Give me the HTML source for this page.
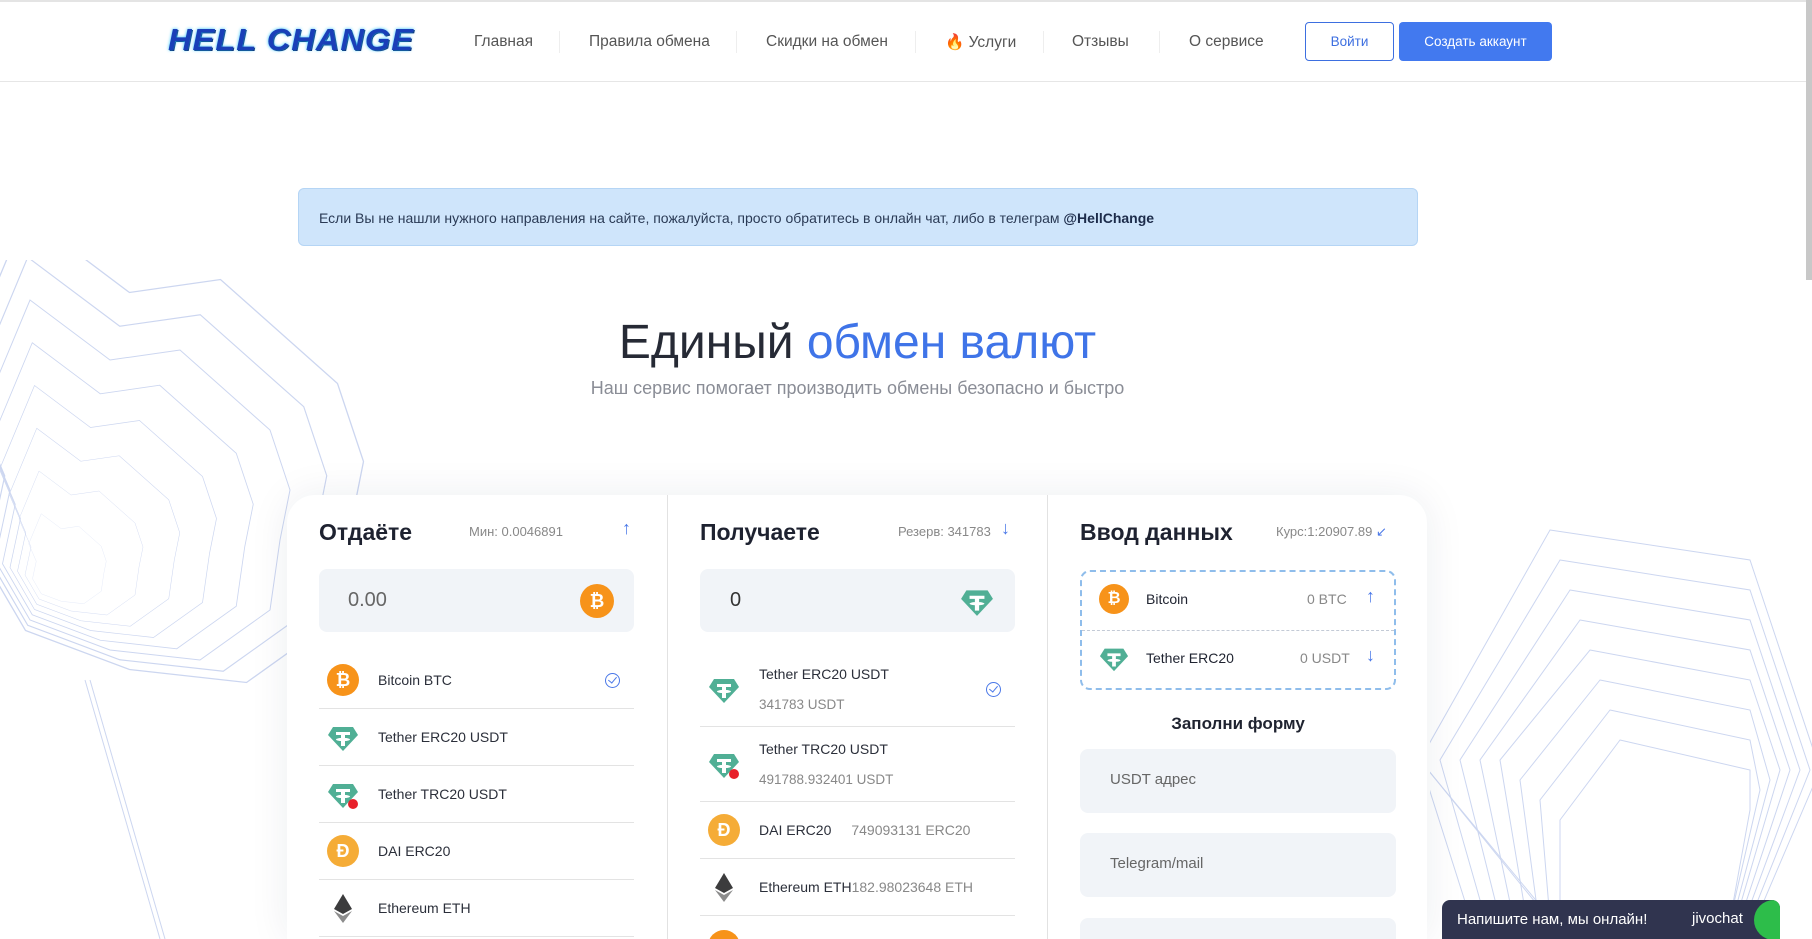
<!DOCTYPE html>
<html><head><meta charset="utf-8"><style>
*{box-sizing:border-box;margin:0;padding:0}
html,body{width:1812px;height:939px;overflow:hidden}
body{background:#fff;font-family:"Liberation Sans",sans-serif;position:relative;color:#1f2330}
.abs{position:absolute}
.hdr{left:0;top:0;width:1806px;height:82px;border-top:2px solid #e4e4e4;border-bottom:1px solid #e6e6e6;background:#fff}
.nav{top:33px;font-size:15.5px;color:#555;white-space:nowrap}
.sep{top:31px;width:1px;height:22px;background:#eee}
.btn{top:22px;height:39px;border-radius:4px;font-size:13.5px;display:flex;align-items:center;justify-content:center}
.alert{left:298px;top:188px;width:1120px;height:58px;background:#cfe5fb;border:1px solid #b5d5f5;border-radius:6px;font-size:14px;color:#2a3a55;padding:21px 20px;white-space:nowrap}
.card{left:287px;top:495px;width:1140px;height:444px;background:#fff;border-radius:28px 28px 0 0;box-shadow:0 0 40px rgba(30,40,80,.08)}
.title{font-size:23px;font-weight:bold;color:#1e2230}
.small{font-size:13px;color:#888}
.inp{height:63px;background:#f1f4f8;border-radius:8px}
.row{height:57px;border-bottom:1px solid #e3e3e3;display:flex;align-items:center;font-size:14px;color:#2b2f3a}
.ic{width:32px;height:32px;border-radius:50%;display:flex;align-items:center;justify-content:center;color:#fff;font-weight:bold;font-size:18px;flex:none}
.btc{background:#f7931a}
.dai{background:#f5ac37}
.arrow{color:#4a78e8;font-size:18px}
.chk{width:15px;height:15px;border:1.5px solid #4a78e8;border-radius:50%;margin-right:14px;position:relative}
.chk:after{content:"";position:absolute;left:4px;top:1px;width:4px;height:7px;border:solid #4a78e8;border-width:0 1.5px 1.5px 0;transform:rotate(40deg)}
.field{left:1080px;width:316px;height:64px;background:#f1f4f8;border-radius:8px;font-size:15px;color:#666;padding:22px 30px}
</style></head><body>
<svg class="abs" style="left:0;top:260px" width="420" height="679" viewBox="0 0 420 679">
<g fill="none" stroke="#ccd6f0" stroke-width="1">
<polygon points="30,40 110,100 180,90 270,170 290,230 280,280 270,350 200,400 110,390 30,360 -5,300 10,230 -20,160"/>
<polygon points="30,40 110,100 180,90 270,170 290,230 280,280 270,350 200,400 110,390 30,360 -5,300 10,230 -20,160" transform="translate(45,325) scale(1.15) translate(-45,-325)"/>
<polygon points="30,40 110,100 180,90 270,170 290,230 280,280 270,350 200,400 110,390 30,360 -5,300 10,230 -20,160" transform="translate(45,325) scale(1.3) translate(-45,-325)"/>
<polygon points="30,40 110,100 180,90 270,170 290,230 280,280 270,350 200,400 110,390 30,360 -5,300 10,230 -20,160" transform="translate(45,325) scale(0.85) translate(-45,-325)"/>
<polygon points="30,40 110,100 180,90 270,170 290,230 280,280 270,350 200,400 110,390 30,360 -5,300 10,230 -20,160" transform="translate(45,325) scale(0.7) translate(-45,-325)"/>
<polygon points="30,40 110,100 180,90 270,170 290,230 280,280 270,350 200,400 110,390 30,360 -5,300 10,230 -20,160" transform="translate(45,325) scale(0.55) translate(-45,-325)"/>
<polygon points="30,40 110,100 180,90 270,170 290,230 280,280 270,350 200,400 110,390 30,360 -5,300 10,230 -20,160" transform="translate(45,325) scale(0.4) translate(-45,-325)"/>
<polygon points="30,40 110,100 180,90 270,170 290,230 280,280 270,350 200,400 110,390 30,360 -5,300 10,230 -20,160" transform="translate(45,325) scale(0.25) translate(-45,-325)"/>
<line x1="85" y1="420" x2="160" y2="679"/><line x1="90" y1="420" x2="165" y2="679"/>
</g></svg>
<svg class="abs" style="left:1430px;top:520px" width="382" height="419" viewBox="0 0 382 419">
<g fill="none" stroke="#ccd6f0" stroke-width="1">
<polygon points="120,10 320,40 390,250 300,460 60,460 -10,240"/>
<polygon points="130,40 320,70 380,250 300,450 70,450 10,240"/>
<polygon points="140,70 320,100 370,250 300,440 80,440 30,240"/>
<polygon points="150,100 320,130 360,250 300,430 90,430 50,240"/>
<polygon points="160,130 320,160 350,250 300,420 100,420 70,240"/>
<polygon points="170,160 320,190 340,260 300,410 110,410 90,260"/>
<polygon points="180,190 320,220 330,270 300,400 120,400 110,280"/>
<polygon points="190,220 320,250 320,290 300,400 130,400 130,300"/>
<line x1="-10" y1="240" x2="135" y2="419"/><line x1="-7" y1="244" x2="138" y2="419"/>
</g></svg>

<div class="abs hdr"></div>
<div class="abs" style="left:168px;top:22px;height:36px;white-space:nowrap;font:italic 900 31px/36px 'Liberation Sans',sans-serif;color:#1a3fb8;letter-spacing:1px;text-shadow:0 0 3px #28c4ff,1px 1px 0 #0a1a60;transform:scaleX(1.05);transform-origin:left">HELL CHANGE</div>
<div class="abs nav" style="left:474px">Главная</div>
<div class="abs sep" style="left:559px"></div>
<div class="abs nav" style="left:589px">Правила обмена</div>
<div class="abs sep" style="left:736px"></div>
<div class="abs nav" style="left:766px">Скидки на обмен</div>
<div class="abs sep" style="left:915px"></div>
<div class="abs nav" style="left:945px">🔥 Услуги</div>
<div class="abs sep" style="left:1043px"></div>
<div class="abs nav" style="left:1072px">Отзывы</div>
<div class="abs sep" style="left:1159px"></div>
<div class="abs nav" style="left:1189px">О сервисе</div>
<div class="abs btn" style="left:1305px;width:89px;border:1px solid #3d6fe0;color:#3d6fe0">Войти</div>
<div class="abs btn" style="left:1399px;width:153px;background:#4279ef;color:#fff">Создать аккаунт</div>
<div class="abs" style="left:1806px;top:0;width:6px;height:280px;background:#c8c8c8"></div>

<div class="abs alert">Если Вы не нашли нужного направления на сайте, пожалуйста, просто обратитесь в онлайн чат, либо в телеграм <b style="color:#1c2b4a">@HellChange</b></div>

<div class="abs" style="left:0;width:1715px;top:315px;text-align:center;font-size:48px;color:#262a35">Единый <span style="color:#3f74e8">обмен валют</span></div>
<div class="abs" style="left:0;width:1715px;top:378px;text-align:center;font-size:18px;color:#8a8d96">Наш сервис помогает производить обмены безопасно и быстро</div>

<div class="abs card"></div>
<div class="abs" style="left:667px;top:495px;width:1px;height:444px;background:#e2e2e2"></div>
<div class="abs" style="left:1047px;top:495px;width:1px;height:444px;background:#e2e2e2"></div>

<!-- col1 -->
<div class="abs title" style="left:319px;top:519px">Отдаёте</div>
<div class="abs small" style="left:469px;top:524px">Мин: 0.0046891</div>
<div class="abs arrow" style="left:622px;top:518px">↑</div>
<div class="abs inp" style="left:319px;top:569px;width:315px"></div>
<div class="abs" style="left:348px;top:589px;font-size:20px;color:#666">0.00</div>
<div class="abs ic btc" style="left:580px;top:584px;width:34px;height:34px">₿</div>
<div class="abs" style="left:319px;top:652px;width:315px">
<div class="row"><div class="ic btc" style="margin-left:8px">₿</div><span style="margin-left:19px;flex:1">Bitcoin BTC</span><span class="chk"></span></div>
<div class="row"><svg width="32" height="32" style="margin-left:8px" viewBox="0 0 32 32"><path d="M6 6h20l5 8-15 16L1 14z" fill="#50af95"/><path d="M9 11h14v3h-5v3c3 0 5 1 5 1.5s-2 1.5-5 1.5v5h-4v-5c-3 0-5-1-5-1.5S11 17 14 17v-3H9z" fill="#fff"/></svg><span style="margin-left:19px">Tether ERC20 USDT</span></div>
<div class="row"><svg width="32" height="32" style="margin-left:8px" viewBox="0 0 32 32"><path d="M6 6h20l5 8-15 16L1 14z" fill="#50af95"/><path d="M9 11h14v3h-5v3c3 0 5 1 5 1.5s-2 1.5-5 1.5v5h-4v-5c-3 0-5-1-5-1.5S11 17 14 17v-3H9z" fill="#fff"/><circle cx="26" cy="26" r="5" fill="#e8202a"/></svg><span style="margin-left:19px">Tether TRC20 USDT</span></div>
<div class="row"><div class="ic dai" style="margin-left:8px">Ð</div><span style="margin-left:19px">DAI ERC20</span></div>
<div class="row"><svg width="32" height="32" style="margin-left:8px" viewBox="0 0 32 32"><path d="M16 2l9 15-9 5-9-5z" fill="#3c3c3d"/><path d="M16 24l9-5-9 12-9-12z" fill="#8c8c8c"/></svg><span style="margin-left:19px">Ethereum ETH</span></div>
</div>

<!-- col2 -->
<div class="abs title" style="left:700px;top:519px">Получаете</div>
<div class="abs small" style="left:898px;top:524px">Резерв: 341783</div>
<div class="abs arrow" style="left:1001px;top:518px">↓</div>
<div class="abs inp" style="left:700px;top:569px;width:315px"></div>
<div class="abs" style="left:730px;top:589px;font-size:20px;color:#333">0</div>
<svg class="abs" style="left:960px;top:584px" width="34" height="34" viewBox="0 0 32 32"><path d="M6 6h20l5 8-15 16L1 14z" fill="#50af95"/><path d="M9 11h14v3h-5v3c3 0 5 1 5 1.5s-2 1.5-5 1.5v5h-4v-5c-3 0-5-1-5-1.5S11 17 14 17v-3H9z" fill="#fff"/></svg>
<div class="abs" style="left:700px;top:652px;width:315px">
<div class="row" style="height:75px"><svg width="32" height="32" style="margin-left:8px" viewBox="0 0 32 32"><path d="M6 6h20l5 8-15 16L1 14z" fill="#50af95"/><path d="M9 11h14v3h-5v3c3 0 5 1 5 1.5s-2 1.5-5 1.5v5h-4v-5c-3 0-5-1-5-1.5S11 17 14 17v-3H9z" fill="#fff"/></svg><div style="margin-left:19px;flex:1;line-height:30px">Tether ERC20 USDT<br><span style="color:#888;font-size:13.5px">341783 USDT</span></div><span class="chk"></span></div>
<div class="row" style="height:75px"><svg width="32" height="32" style="margin-left:8px" viewBox="0 0 32 32"><path d="M6 6h20l5 8-15 16L1 14z" fill="#50af95"/><path d="M9 11h14v3h-5v3c3 0 5 1 5 1.5s-2 1.5-5 1.5v5h-4v-5c-3 0-5-1-5-1.5S11 17 14 17v-3H9z" fill="#fff"/><circle cx="26" cy="26" r="5" fill="#e8202a"/></svg><div style="margin-left:19px;line-height:30px">Tether TRC20 USDT<br><span style="color:#888;font-size:13.5px">491788.932401 USDT</span></div></div>
<div class="row"><div class="ic dai" style="margin-left:8px">Ð</div><span style="margin-left:19px">DAI ERC20</span><span style="margin-left:20px;color:#888">749093131 ERC20</span></div>
<div class="row"><svg width="32" height="32" style="margin-left:8px" viewBox="0 0 32 32"><path d="M16 2l9 15-9 5-9-5z" fill="#3c3c3d"/><path d="M16 24l9-5-9 12-9-12z" fill="#8c8c8c"/></svg><span style="margin-left:19px">Ethereum ETH</span><span style="color:#888">182.98023648 ETH</span></div>
</div>
<div class="abs ic btc" style="left:708px;top:930px"></div>

<!-- col3 -->
<div class="abs title" style="left:1080px;top:519px">Ввод данных</div>
<div class="abs small" style="left:1276px;top:524px">Курс:1:20907.89 <span style="color:#4a78e8">↙</span></div>
<div class="abs" style="left:1080px;top:570px;width:316px;height:120px;border:2px dashed #8fbdeb;border-radius:10px"></div>
<div class="abs" style="left:1082px;top:630px;width:312px;border-top:1px dashed #c3cad6"></div>
<div class="abs ic btc" style="left:1099px;top:584px;width:30px;height:30px;font-size:16px">₿</div>
<div class="abs" style="left:1146px;top:591px;font-size:14px">Bitcoin</div>
<div class="abs" style="left:1307px;top:591px;font-size:14px;color:#888">0 BTC</div>
<div class="abs arrow" style="left:1366px;top:586px">↑</div>
<svg class="abs" style="left:1099px;top:643px" width="30" height="30" viewBox="0 0 32 32"><path d="M6 6h20l5 8-15 16L1 14z" fill="#50af95"/><path d="M9 11h14v3h-5v3c3 0 5 1 5 1.5s-2 1.5-5 1.5v5h-4v-5c-3 0-5-1-5-1.5S11 17 14 17v-3H9z" fill="#fff"/></svg>
<div class="abs" style="left:1146px;top:650px;font-size:14px">Tether ERC20</div>
<div class="abs" style="left:1300px;top:650px;font-size:14px;color:#888">0 USDT</div>
<div class="abs arrow" style="left:1366px;top:645px">↓</div>
<div class="abs" style="left:1080px;width:316px;top:714px;text-align:center;font-size:17px;font-weight:bold">Заполни форму</div>
<div class="abs field" style="top:749px">USDT адрес</div>
<div class="abs field" style="top:833px">Telegram/mail</div>
<div class="abs field" style="top:918px;height:21px"></div>

<div class="abs" style="left:1442px;top:900px;width:338px;height:39px;background:#30344f;border-radius:8px 8px 0 0;color:#fff;font-size:15px;padding:11px 15px;overflow:hidden">Напишите нам, мы онлайн!<span style="position:absolute;left:250px;top:10px;font-size:15px">jivochat</span><span style="position:absolute;right:-14px;top:0;width:40px;height:40px;border-radius:50%;background:#2dbd4a"></span></div>
</body></html>
